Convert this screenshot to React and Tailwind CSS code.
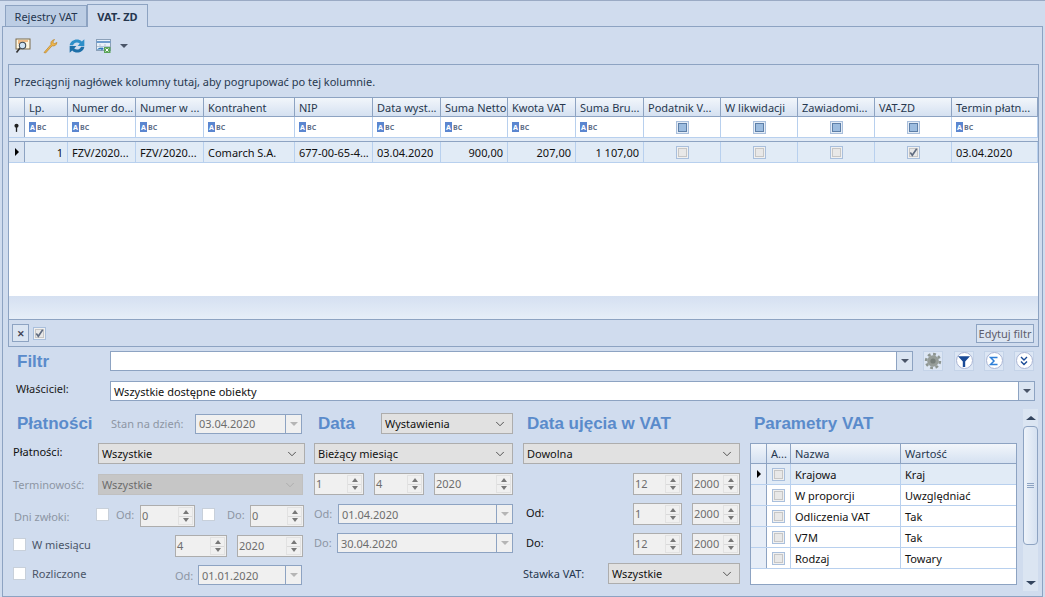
import { ChevronDown } from 'lucide-react'

const FONT = "font-['Noto_Sans','Open_Sans',sans-serif]"

const cols = [
  { w: 'w-[43px]', label: 'Lp.' },
  { w: 'w-[68px]', label: 'Numer do...' },
  { w: 'w-[68px]', label: 'Numer w ...' },
  { w: 'w-[91px]', label: 'Kontrahent' },
  { w: 'w-[78px]', label: 'NIP' },
  { w: 'w-[68px]', label: 'Data wyst...' },
  { w: 'w-[67px]', label: 'Suma Netto' },
  { w: 'w-[68px]', label: 'Kwota VAT' },
  { w: 'w-[68px]', label: 'Suma Bru...' },
  { w: 'w-[77px]', label: 'Podatnik V...', check: true },
  { w: 'w-[77px]', label: 'W likwidacji', check: true },
  { w: 'w-[77px]', label: 'Zawiadomi...', check: true },
  { w: 'w-[77px]', label: 'VAT-ZD', check: true },
  { w: 'flex-1', label: 'Termin płatn...' },
]

const rowValues = ['1', 'FZV/2020...', 'FZV/2020...', 'Comarch S.A.', '677-00-65-4...', '03.04.2020', '900,00', '207,00', '1 107,00', null, null, null, 'x', '03.04.2020']
const rightAligned = [0, 6, 7, 8]

const params = [
  ['Krajowa', 'Kraj'],
  ['W proporcji', 'Uwzględniać'],
  ['Odliczenia VAT', 'Tak'],
  ['V7M', 'Tak'],
  ['Rodzaj', 'Towary'],
]

function Abc() {
  return (
    <span className="flex items-center gap-px">
      <span className="flex h-[10px] w-[7px] items-center justify-center bg-[#5b86d0] text-[7px] font-bold leading-none text-white">A</span>
      <span className="text-[7px] font-bold leading-none text-[#5f6f88]">BC</span>
    </span>
  )
}

function GridCheck({ checked, tone = 'gray' }) {
  if (tone === 'blue') {
    return (
      <span className="flex h-[13px] w-[13px] items-center justify-center border border-[#a9bfdc] bg-[#e4ecf6]">
        <span className="h-[9px] w-[9px] border border-[#5d7fa8] bg-[#9cbcdf]" />
      </span>
    )
  }
  return (
    <span className="relative flex h-[13px] w-[13px] items-center justify-center border border-[#a9bfdc] bg-[#f0f0f0]">
      <span className="h-[9px] w-[9px] border border-[#c6c6c6] bg-[#e8e8e8]" />
      {checked && (
        <svg viewBox="0 0 12 12" className="absolute left-0 top-0 h-[11px] w-[11px]">
          <path d="M2.5 6l2.2 3L9.500 2" fill="none" stroke="#606c80" strokeWidth="1.800" />
        </svg>
      )}
    </span>
  )
}

function Arrow({ dim }) {
  return <span className={`h-0 w-0 border-x-[4px] border-t-[4px] border-x-transparent ${dim ? 'border-t-[#b5b5b5]' : 'border-t-[#4a5568]'}`} />
}

function Select({ value, className = '', disabled }) {
  return (
    <div className={`flex h-[21px] items-center justify-between border pl-[3px] pr-[5px] ${disabled ? 'border-[#c0c0c0] bg-[#c6c6c6] text-[#6d6d6d]' : 'border-[#adadad] bg-[#e1e1e1] text-[#111]'} ${className}`}>
      <span>{value}</span>
      <ChevronDown size={14} strokeWidth={1.4} className={disabled ? 'text-[#a8a8a8]' : 'text-[#333]'} />
    </div>
  )
}

function Spin({ value, className = '' }) {
  return (
    <div className={`flex h-[22px] items-center justify-between border border-[#adadad] bg-[#f0f0f0] pl-[1px] pr-[1px] text-[#6d6d6d] ${className}`}>
      <span className="-mt-0.5">{value}</span>
      <span className="flex h-[18px] w-[15px] flex-col border border-[#e2e2e2]">
        <span className="flex flex-1 items-center justify-center border-b border-[#d9d9d9]">
          <span className="h-0 w-0 border-x-[3px] border-b-[4px] border-x-transparent border-b-[#777]" />
        </span>
        <span className="flex flex-1 items-center justify-center">
          <span className="h-0 w-0 border-x-[3px] border-t-[4px] border-x-transparent border-t-[#777]" />
        </span>
      </span>
    </div>
  )
}

function DateBox({ value, className = '', border = 'border-[#8da3c2]' }) {
  return (
    <div className={`flex h-[20px] items-center border bg-[#f0f0f0] text-[#6d6d6d] ${border} ${className}`}>
      <span className="flex-1 pl-[3px]">{value}</span>
      <span className={`flex h-full w-[16px] items-center justify-center border-l ${border}`}>
        <Arrow dim />
      </span>
    </div>
  )
}

function Box({ className = '' }) {
  return <span className={`h-[13px] w-[13px] border border-[#c8d0da] bg-white ${className}`} />
}

function Heading({ children, className = '' }) {
  return <span className={`font-['Liberation_Sans',sans-serif] text-[17px] font-bold leading-none text-[#5a8bcb] ${className}`}>{children}</span>
}

function RoundBtn({ children }) {
  return (
    <span className="flex h-[20px] w-[20px] items-center justify-center border border-[#c4d3e8] bg-[#dce6f4]">
      <span className="flex h-[17px] w-[17px] items-center justify-center rounded-full border border-[#a9b4d4] bg-white">{children}</span>
    </span>
  )
}

function SearchIcon() {
  return (
    <svg viewBox="0 0 16 16" className="h-[16px] w-[16px]">
      <rect x="1" y="1" width="14" height="10" fill="#fff6e0" stroke="#7a6a4a" />
      <path d="M3 3h10M3 5h5" stroke="#e0812c" />
      <circle cx="7.500" cy="7.500" r="3.200" fill="#cfe3f4" stroke="#3f4a55" strokeWidth="1.100" />
      <path d="M5 10l-3.500 4.500" stroke="#333" strokeWidth="1.600" />
    </svg>
  )
}

function WrenchIcon() {
  return (
    <svg viewBox="0 0 16 16" className="h-[16px] w-[16px]">
      <path d="M2 14.500L9 6.500c-.6-2 .5-4.500 3.500-5l-1.700 2.600 1.500 1.700 2.600-1.400c-.2 2.800-2.600 4-4.800 3.400L3.600 15z" fill="#eeb64e" stroke="#b98326" strokeWidth=".7" />
    </svg>
  )
}

function RefreshIcon() {
  return (
    <svg viewBox="2 2 12 12" className="h-[16px] w-[16px]">
      <path d="M2.500 7.500C3 3.500 8.500 1.500 11.600 4.600L13.500 3v5h-5l1.600-1.800C8.200 4.600 5.600 5.400 5 7.500z" fill="#2e8fc9" />
      <path d="M13.500 8.500c-.5 4-6 6-9.100 2.900L2.500 13V8h5L5.900 9.800c1.900 1.600 4.500.8 5.100-1.300z" fill="#1d6fa8" />
    </svg>
  )
}

function ExportIcon() {
  return (
    <svg viewBox="0 0 16 16" className="h-[16px] w-[16px]">
      <rect x=".5" y="1.500" width="14" height="11" fill="#e8f0f8" stroke="#8ba0b8" />
      <path d="M.5 4h14" stroke="#6e9ccc" strokeWidth="2" />
      <path d="M4 6v6M9 6v6M1 8.500h13" stroke="#b4c4d6" />
      <rect x="8" y="9" width="6.500" height="6" fill="#5ba457" />
      <path d="M9.500 10.500l3 3m0-3l-3 3" stroke="#fff" />
      <path d="M1 12c1-2 3-2.500 5-2l-.5-1.300L8 11l-3 1.500.4-1.200C4 11 2.600 11.200 1 12z" fill="#2b78b8" />
    </svg>
  )
}

function GearIcon() {
  return (
    <svg viewBox="0 0 18 18" className="h-[18px] w-[18px]">
      <circle cx="9" cy="9" r="6.900" fill="none" stroke="#8d9591" strokeWidth="2.600" strokeDasharray="2.800 2.600" />
      <circle cx="9" cy="9" r="5.800" fill="#969d99" />
      <circle cx="9" cy="9" r="2.600" fill="#777f7b" />
    </svg>
  )
}

export default function App() {
  return (
    <div className={`${FONT} h-[597px] w-[1045px] overflow-hidden bg-[#d0dcee] text-[11px] leading-none text-[#1b1b1b]`}>
      {/* tabs */}
      <div className="h-[3px] border-t border-[#9aaac4]" />
      <div className="flex h-[23px] items-end pl-[5px]">
        <div className="flex h-[21px] w-[82px] items-center justify-center border border-b-0 border-[#8da3c2] bg-[#bccde4] text-[#25364f]">Rejestry VAT</div>
        <div className="-mb-px z-10 flex h-[23px] w-[61px] items-center justify-center border border-b-0 border-[#8da3c2] bg-[#d0dcee] font-bold text-[#25364f]">VAT- ZD</div>
      </div>

      <div className="mx-[2px] h-[571px] border border-[#8da3c2] px-[5px]">
        {/* toolbar */}
        <div className="flex h-[37px] items-center gap-[11px] pl-[7px]">
          <SearchIcon />
          <WrenchIcon />
          <RefreshIcon />
          <div className="flex items-center gap-[8px]">
            <ExportIcon />
            <Arrow />
          </div>
        </div>

        {/* grid */}
        <div className="h-[283px] w-[1031px] border border-[#8da3c2] bg-white">
          <div className="flex h-[32px] items-center bg-[#d0dcee] pl-[5px] text-[#27384f]">Przeciągnij nagłówek kolumny tutaj, aby pogrupować po tej kolumnie.</div>

          <div className="flex h-[20px] border-y border-[#8da3c2] bg-gradient-to-b from-[#f2f6fb] to-[#d5e1f1] text-[#27384f]">
            <div className="w-[16px] border-r border-[#8da3c2]" />
            {cols.map((c) => (
              <div key={c.label} className={`${c.w} flex items-center border-r border-[#8da3c2] pl-[4px] whitespace-nowrap`}>{c.label}</div>
            ))}
          </div>

          <div className="flex h-[21px] border-b border-[#b8d0ee]">
            <div className="flex w-[16px] items-center justify-center border-r border-[#8da3c2] bg-[#e6edf7]">
              <svg viewBox="0 0 8 10" className="h-[9px] w-[7px]">
                <circle cx="4" cy="3" r="2.400" fill="#222" />
                <path d="M4 4v6" stroke="#222" strokeWidth="1.500" />
              </svg>
            </div>
            {cols.map((c) => (
              <div key={c.label} className={`${c.w} flex items-center border-r border-[#b8d0ee] ${c.check ? 'justify-center' : 'pl-[4px]'}`}>
                {c.check ? <GridCheck tone="blue" /> : <Abc />}
              </div>
            ))}
          </div>

          <div className="h-[4px] border-b border-[#8da3c2] bg-[#e2ebf6]" />

          <div className="flex h-[21px] border-b border-[#b8d0ee] bg-[#e1ebf6] text-[#111]">
            <div className="flex w-[16px] items-center justify-center border-r border-[#8da3c2] bg-[#dbe5f2]">
              <span className="h-0 w-0 border-y-[4px] border-l-[4px] border-y-transparent border-l-black" />
            </div>
            {cols.map((c, i) => (
              <div key={c.label} className={`${c.w} flex items-center whitespace-nowrap border-r border-[#b8d0ee] px-[4px] ${rightAligned.includes(i) ? 'justify-end' : ''} ${c.check ? 'justify-center' : ''}`}>
                {c.check ? <GridCheck checked={rowValues[i] === 'x'} /> : rowValues[i]}
              </div>
            ))}
          </div>

          <div className="h-[133px]" />
          <div className="h-[24px] border-b border-[#8da3c2] bg-gradient-to-b from-[#d5e0f1] to-[#e6eef8]" />

          <div className="flex h-[26px] items-center justify-between bg-[#d0dcee] pl-[3px] pr-[4px]">
            <div className="flex items-center gap-[4px]">
              <span className="flex h-[18px] w-[17px] items-center justify-center border border-[#8da3c2] bg-[#dbe5f2] text-[9px] font-bold text-[#445]">✕</span>
              <GridCheck checked />
            </div>
            <span className="flex h-[19px] w-[58px] items-center justify-center border border-[#8da3c2] bg-[#dbe5f2] text-[#5d5d6c]">Edytuj filtr</span>
          </div>
        </div>

        {/* filter row */}
        <div className="mt-[3px] flex h-[21px] items-center">
          <Heading className="ml-[9px] w-[93px] pt-[2px]">Filtr</Heading>
          <div className="flex h-[20px] w-[803px] border border-[#8da3c2] bg-white">
            <span className="flex-1" />
            <span className="flex w-[16px] items-center justify-center border-l border-[#8da3c2] bg-[#dbe5f2]"><Arrow /></span>
          </div>
          <span className="ml-[10px] flex h-[20px] w-[20px] items-center justify-center border border-[#c4d3e8] bg-[#dce6f4]"><GearIcon /></span>
          <span className="ml-[11px]"><RoundBtn>
            <svg viewBox="0 0 10 10" className="h-[12px] w-[12px]"><path d="M0 1h10L6 5.500V10H4V5.500z" fill="#1a4a96" /></svg>
          </RoundBtn></span>
          <span className="ml-[10px]"><RoundBtn>
            <svg viewBox="0 0 10 10" className="h-[10px] w-[10px]"><path d="M8.500 1.500h-7L5 5 1.500 8.500h7" fill="none" stroke="#2f7fd8" strokeWidth="1.500" /></svg>
          </RoundBtn></span>
          <span className="ml-[10px]"><RoundBtn>
            <svg viewBox="0 0 10 10" className="h-[10px] w-[10px]"><path d="M2 1l3 3 3-3M2 5.500l3 3 3-3" fill="none" stroke="#1a4a96" strokeWidth="1.400" /></svg>
          </RoundBtn></span>
        </div>

        <div className="mt-[10px] flex h-[20px] items-center">
          <span className="ml-[8px] w-[94px] -mt-[6px]">Właściciel:</span>
          <div className="flex h-[20px] w-[925px] border border-[#8da3c2] bg-white text-[#111]">
            <span className="flex flex-1 items-center pl-[3px]">Wszystkie dostępne obiekty</span>
            <span className="flex w-[16px] items-center justify-center border-l border-[#8da3c2] bg-[#dbe5f2]"><Arrow /></span>
          </div>
        </div>

        {/* form columns */}
        <div className="mt-[11px] flex">
          {/* Płatności */}
          <div className="w-[304px] flex-none text-[#8d96a4]">
            <div className="flex h-[23px] items-center">
              <Heading className="ml-[9px] w-[84px]">Płatności</Heading>
              <span className="w-[88px] pl-[10px]">Stan na dzień:</span>
              <div className="w-[6px]" />
              <DateBox value="03.04.2020" className="w-[107px]" />
            </div>
            <div className="mt-[8px] flex h-[21px] items-center">
              <span className="w-[90px] pl-[5px] text-[#111] -mt-1">Płatności:</span>
              <Select value="Wszystkie" className="w-[207px]" />
            </div>
            <div className="mt-[10px] flex h-[21px] items-center">
              <span className="w-[90px] pl-[5px]">Terminowość:</span>
              <Select value="Wszystkie" className="w-[205px]" disabled />
            </div>
            <div className="mt-[10px] flex h-[22px] items-center">
              <span className="w-[88px] pl-[6px]">Dni zwłoki:</span>
              <Box className="-mt-[3px]" />
              <span className="ml-[7px] w-[24px] -mt-[3px]">Od:</span>
              <Spin value="0" className="w-[55px]" />
              <Box className="ml-[7px] -mt-[3px]" />
              <span className="ml-[12px] w-[23px] -mt-[3px]">Do:</span>
              <Spin value="0" className="w-[54px]" />
            </div>
            <div className="mt-[8px] flex h-[22px] items-center">
              <Box className="ml-[5px] -mt-[3px]" />
              <span className="ml-[6px] w-[143px] -mt-[3px] text-[#4a5568]">W miesiącu</span>
              <Spin value="4" className="w-[52px]" />
              <Spin value="2020" className="ml-[10px] w-[66px]" />
            </div>
            <div className="mt-[8px] flex h-[20px] items-center">
              <Box className="ml-[5px] -mt-[3px]" />
              <span className="ml-[6px] w-[143px] -mt-[3px] text-[#4a5568]">Rozliczone</span>
              <span className="w-[23px]">Od:</span>
              <DateBox value="01.01.2020" className="w-[104px]" />
            </div>
          </div>

          {/* Data */}
          <div className="ml-[2px] w-[199px] flex-none text-[#8d96a4]">
            <div className="flex h-[23px] items-center">
              <Heading className="ml-[4px] w-[63px]">Data</Heading>
              <Select value="Wystawienia" className="w-[132px]" />
            </div>
            <div className="mt-[8px]"><Select value="Bieżący miesiąc" className="w-[199px]" /></div>
            <div className="mt-[9px] flex h-[22px] items-center gap-[10px]">
              <Spin value="1" className="w-[50px]" />
              <Spin value="4" className="w-[50px]" />
              <Spin value="2020" className="w-[79px]" />
            </div>
            <div className="mt-[9px] flex h-[22px] items-start">
              <span className="mt-[4px] w-[24px]">Od:</span>
              <DateBox value="01.04.2020" className="w-[175px]" />
            </div>
            <div className="mt-[7px] flex h-[22px] items-start">
              <span className="mt-[4px] w-[23px]">Do:</span>
              <DateBox value="30.04.2020" className="w-[176px]" />
            </div>
          </div>

          {/* Data ujęcia w VAT */}
          <div className="ml-[10px] w-[217px] flex-none text-[#111]">
            <div className="flex h-[23px] items-center"><Heading className="ml-[4px]">Data ujęcia w VAT</Heading></div>
            <div className="mt-[8px]"><Select value="Dowolna" /></div>
            <div className="mt-[9px] flex h-[22px] items-center justify-end gap-[10px]">
              <Spin value="12" className="w-[49px]" />
              <Spin value="2000" className="w-[48px]" />
            </div>
            <div className="mt-[8px] flex h-[22px] items-center gap-[10px]">
              <span className="flex-1 pl-[3px] -mt-1">Od:</span>
              <Spin value="1" className="w-[49px]" />
              <Spin value="2000" className="w-[48px]" />
            </div>
            <div className="mt-[8px] flex h-[22px] items-center gap-[10px]">
              <span className="flex-1 pl-[3px] -mt-1">Do:</span>
              <Spin value="12" className="w-[49px]" />
              <Spin value="2000" className="w-[48px]" />
            </div>
            <div className="mt-[8px] flex h-[21px] items-center">
              <span className="w-[85px] text-[#27384f]">Stawka VAT:</span>
              <Select value="Wszystkie" className="w-[132px]" />
            </div>
          </div>

          {/* Parametry VAT */}
          <div className="ml-[10px] w-[267px] flex-none">
            <div className="flex h-[23px] items-center"><Heading className="ml-[4px]">Parametry VAT</Heading></div>
            <div className="mt-[8px] h-[142px] border border-[#8da3c2] bg-white text-[#111]">
              <div className="flex h-[20px] border-b border-[#8da3c2] bg-gradient-to-b from-[#f2f6fb] to-[#d5e1f1] text-[#27384f]">
                <div className="w-[16px] border-r border-[#8da3c2]" />
                <div className="flex w-[24px] items-center border-r border-[#8da3c2] pl-[4px]">A...</div>
                <div className="flex w-[110px] items-center border-r border-[#8da3c2] pl-[4px]">Nazwa</div>
                <div className="flex flex-1 items-center pl-[4px]">Wartość</div>
              </div>
              {params.map(([name, value], i) => (
                <div key={name} className={`flex h-[21px] border-b border-[#b8d0ee] ${i === 0 ? 'bg-[#e1ebf6]' : ''}`}>
                  <div className="flex w-[16px] items-center justify-center border-r border-[#8da3c2] bg-[#e6edf7]">
                    {i === 0 && <span className="h-0 w-0 border-y-[4px] border-l-[4px] border-y-transparent border-l-black" />}
                  </div>
                  <div className="flex w-[24px] items-center justify-center border-r border-[#b8d0ee]"><GridCheck /></div>
                  <div className="flex w-[110px] items-center border-r border-[#b8d0ee] pl-[4px]">{name}</div>
                  <div className="flex flex-1 items-center pl-[4px]">{value}</div>
                </div>
              ))}
            </div>
          </div>

          {/* scrollbar */}
          <div className="ml-[6px] -mt-[3px] flex h-[182px] w-[15px] flex-none flex-col bg-[#dbe5f2]">
            <span className="flex h-[17px] items-center justify-center">
              <span className="h-0 w-0 border-x-[5px] border-b-[4px] border-x-transparent border-b-[#33445e]" />
            </span>
            <span className="flex h-[119px] flex-col items-center justify-center gap-px rounded-sm border border-[#8da3c2] bg-gradient-to-r from-[#eef3fa] to-[#d5e1f1]">
              <span className="h-px w-[7px] bg-[#8da3c2]" />
              <span className="h-px w-[7px] bg-[#8da3c2]" />
              <span className="h-px w-[7px] bg-[#8da3c2]" />
            </span>
            <span className="flex flex-1 items-end justify-center pb-[6px]">
              <span className="h-0 w-0 border-x-[5px] border-t-[4px] border-x-transparent border-t-[#33445e]" />
            </span>
          </div>
        </div>
      </div>
    </div>
  )
}
